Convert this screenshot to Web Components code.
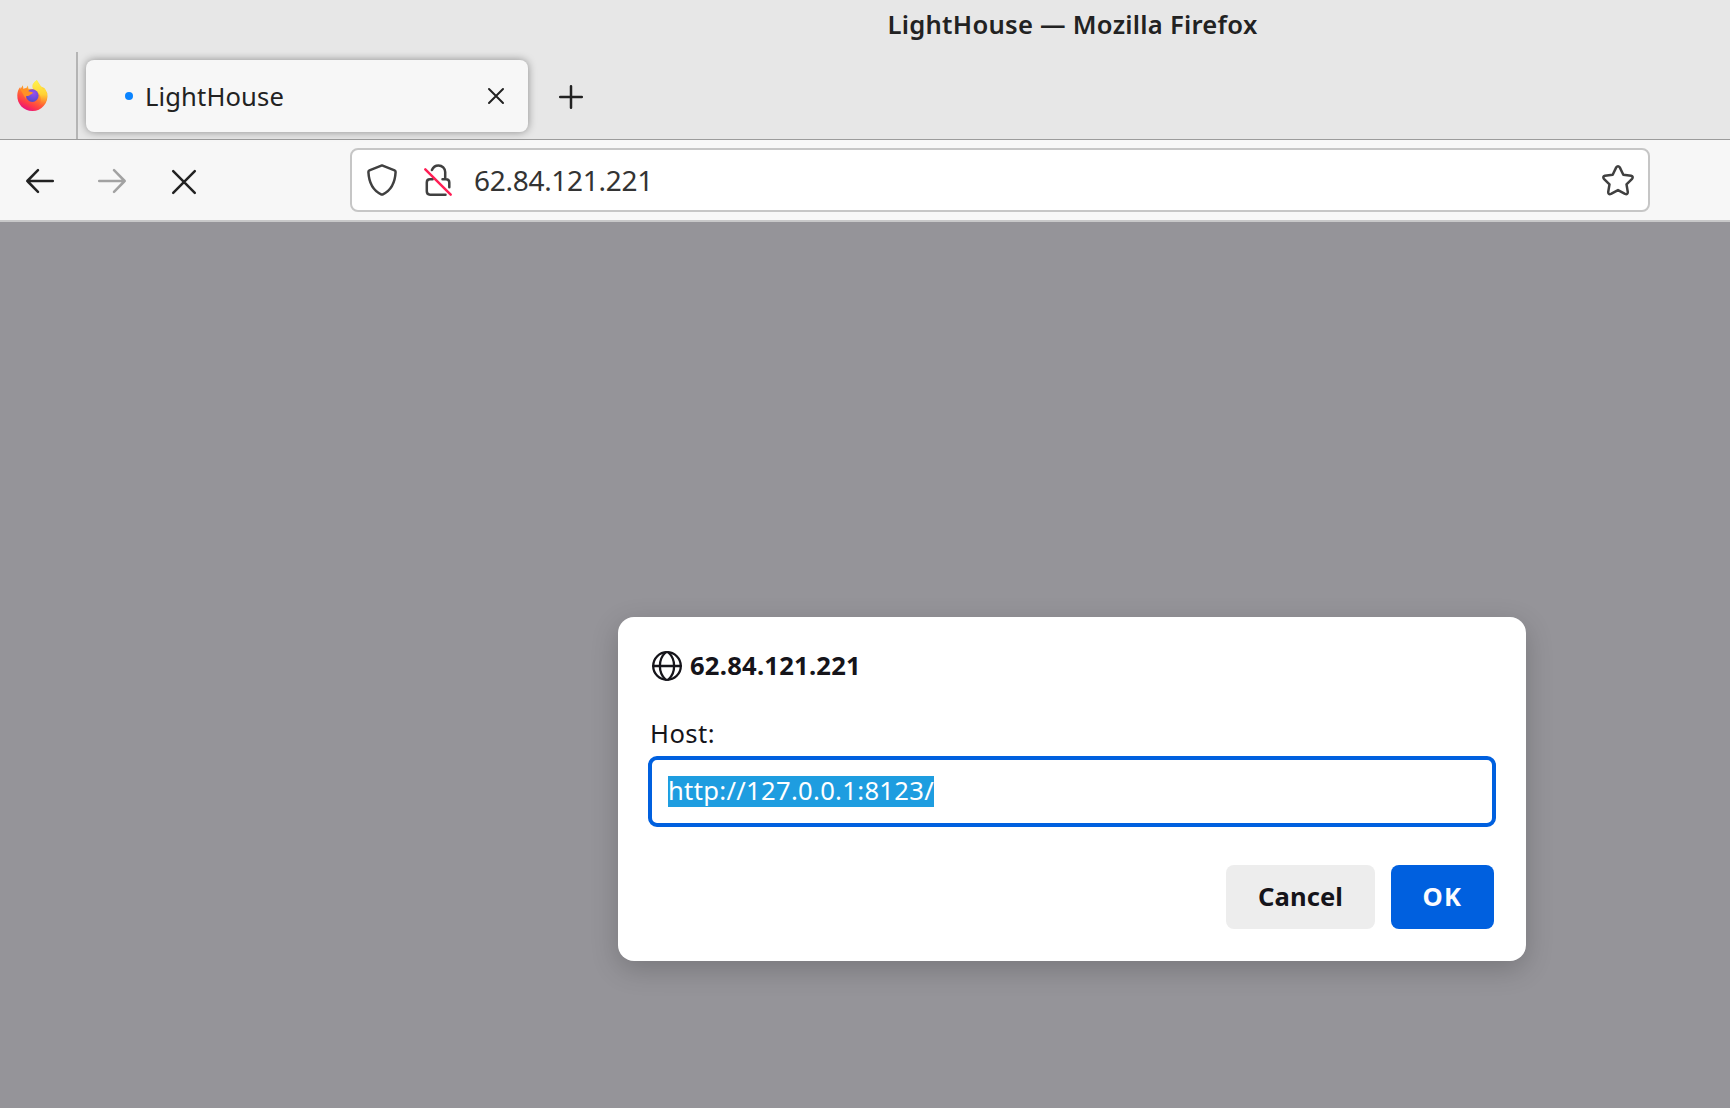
<!DOCTYPE html>
<html lang="en">
<head>
<meta charset="utf-8">
<title>LightHouse — Mozilla Firefox</title>
<style>
html, body { margin: 0; width: 1730px; height: 1108px; overflow: hidden; background: #959499; }
body { font-family: "Noto Sans", "Open Sans", sans-serif; }
</style>
</head>
<body>
<browser-window></browser-window>
<script>
const define = (name, html) => customElements.define(name, class extends HTMLElement {
  constructor() {
    super();
    this.attachShadow({ mode: 'open' }).innerHTML = html;
  }
});

/* A single line of text that adjusts its tracking to occupy a given width. */
customElements.define('ui-text', class extends HTMLElement {
  connectedCallback() {
    if (this.shadowRoot) return;
    this.attachShadow({ mode: 'open' }).innerHTML = `
      <style>:host{display:block;white-space:nowrap;flex:none;line-height:1.2}span{display:inline-block}</style><span></span>`;
    const span = this.shadowRoot.querySelector('span');
    const text = this.getAttribute('text');
    span.textContent = text;
    const target = +this.getAttribute('fit');
    const natural = span.getBoundingClientRect().width;
    if (target && natural) span.style.letterSpacing = ((target - natural) / text.length).toFixed(3) + 'px';
  }
});

/* Icons share one element; the artwork is chosen by name. */
const ICONS = {
  back: [28, 24, '<path d="M12 1.2 1.3 12 12 22.8M1.3 12h25.5"/>'],
  forward: [28, 24, '<path d="M16 1.2 26.7 12 16 22.8M26.7 12H1.2"/>'],
  stop: [24, 24, '<path d="m1.2 1.2 21.6 21.6m0-21.6L1.2 22.8"/>'],
  close: [16, 16, '<path stroke-width="2" d="m1 1 14 14m0-14L1 15"/>'],
  plus: [24, 24, '<path d="M12 1.2v21.6M1.2 12h21.6"/>'],
  shield: [30, 32, '<path d="M15 1.4 27.6 6.3Q28.7 6.8 28.6 8C28 19.5 24.3 26.3 15.9 30.3Q15 30.8 14.1 30.3C5.7 26.3 2 19.5 1.4 8Q1.3 6.8 2.4 6.3Z"/>'],
  lock: [28, 32, '<path d="M7.9 6C9.2 2.9 11.7 1.4 14.5 1.4c3.7 0 6.7 3 6.7 6.7v7M18.5 15.2H22q3.3 0 3.3 3.3v4.8M8.6 15.2H6q-3.2 0-3.2 3.2v8.9Q2.8 30.7 6 30.7h15.5"/><path d="m1.3 5.3 25.4 25.4" stroke="#ff1f55"/>'],
  star: [32, 31, '<path stroke-width="2.5" d="M14.1 2.6q1.9-2.5 3.8 0l3.4 7.1 7.8 1.1q2.6.8 1 3l-5.6 5.5 1.3 7.8q-.2 2.9-2.8 1.8L16 25.1l-7 3.8q-2.6 1.1-2.8-1.8l1.3-7.8-5.6-5.5q-1.6-2.2 1-3l7.8-1.1Z"/>'],
  globe: [30, 30, '<circle cx="15" cy="15" r="13.8" stroke-width="2.3"/><path stroke-width="2.3" d="M1.2 15h27.6M13.5 1.5C6 8.5 6 21.5 13.5 28.5M16.5 1.5C24 8.5 24 21.5 16.5 28.5"/>'],
  firefox: [31, 31, `<defs>
    <linearGradient id="b" x1=".82" y1=".08" x2=".35" y2="1"><stop offset="0" stop-color="#fff14a"/><stop offset=".3" stop-color="#ffb52b"/><stop offset=".56" stop-color="#ff7030"/><stop offset=".8" stop-color="#ff3a48"/><stop offset="1" stop-color="#e8107e"/></linearGradient>
    <linearGradient id="y" x1=".5" y1="0" x2=".5" y2="1"><stop offset="0" stop-color="#fff44f"/><stop offset=".55" stop-color="#ffd236"/><stop offset="1" stop-color="#ff8c2e" stop-opacity="0"/></linearGradient>
    <radialGradient id="p" cx=".6" cy=".3" r=".75"><stop offset="0" stop-color="#9a4fec"/><stop offset=".6" stop-color="#6c4cdb"/><stop offset="1" stop-color="#5548c0"/></radialGradient></defs>
    <g stroke="none"><path fill="url(#b)" d="M5.8 5.2 6.5 9 9.2 8.3 10.9 5.6 11.4 8.8 16 9 15.7 4.5 19.9 0 24 6.4 27.4 8 30.3 13.2C31.8 23 24.5 31 15.5 31 6.5 31 0 24 .3 15.2.4 12 1.3 9.2 3.2 7l.3 2Z"/>
    <path fill="url(#y)" d="M19.9 0c.3 3 2.2 4.6 4.1 6.4 1 1 1.8 1.8 2.1 3l1.7-.8c2 3 3 6.7 1.6 11.1-1.3 4-4.2 6-7.7 6.2 3-4 2.6-9.5-.1-12.6-2-2.4-4.6-3.4-6-5.1-.5-3.2.6-6 4.3-8.2Z"/>
    <circle cx="15.3" cy="15.6" r="6.3" fill="url(#p)"/>
    <path fill="#ff9025" d="M3 8.8c1-.2 2-.2 3.4.2 1.3-.8 2.6-.8 4-.5-.1 1.6.7 2.6 2.1 3.1l3.2.6c.3 1.2-.8 1.8-2.8 2.8-1.2.7-1.2 1.3-3.7 1-.8 1.4-.5 3 .3 4.3Z"/></g>`]
};
customElements.define('ui-icon', class extends HTMLElement {
  connectedCallback() {
    if (this.shadowRoot) return;
    const [w, h, art] = ICONS[this.getAttribute('name')];
    this.attachShadow({ mode: 'open' }).innerHTML = `
      <style>:host{display:block;flex:none;width:${w}px;height:${h}px}svg{display:block;overflow:visible}</style>
      <svg width="${w}" height="${h}" viewBox="0 0 ${w} ${h}" fill="none" stroke="currentColor" stroke-width="2.5" stroke-linecap="round" stroke-linejoin="round">${art}</svg>`;
  }
});

define('title-bar', `
  <style>
    :host{display:flex;height:52px;justify-content:center;box-sizing:border-box;padding:10px 0 0 415px;color:#222;font-size:25.6px;font-weight:600}
  </style>
  <ui-text text="LightHouse — Mozilla Firefox" fit="370"></ui-text>`);

define('tab-strip', `
  <style>
    :host{display:flex;height:88px;box-sizing:border-box;border-bottom:1px solid #9c9c9c;color:#222}
    .view{width:76px;box-sizing:border-box;padding:28px 0 0 16.5px}
    .line{width:2px;background:#b5b5b5}
    .tab{display:flex;align-items:center;width:442px;height:72px;margin:8px 0 0 8px;border-radius:8px;background:#f7f7f7;box-shadow:0 0 8px rgba(0,0,0,.4);box-sizing:border-box;padding:0 24px 0 39px}
    .dot{width:8px;height:8px;border-radius:50%;background:#0a84ff;margin-right:12px}
    ui-text{font-size:25.6px;flex:1;padding-top:3px}
    .new{margin:33px 0 0 31px}
  </style>
  <div class="view"><ui-icon name="firefox"></ui-icon></div><div class="line"></div>
  <div class="tab"><div class="dot"></div><ui-text text="LightHouse" fit="139"></ui-text><ui-icon name="close"></ui-icon></div>
  <ui-icon class="new" name="plus"></ui-icon>`);

define('url-field', `
  <style>
    :host{display:flex;align-items:center;box-sizing:border-box;width:1300px;height:64px;border:2px solid #c6c6c6;border-radius:8px;background:#fff;color:#404040;padding:0 14px 0 15px}
    ui-text{font-size:28px;color:#333;flex:1;margin-left:22px;padding-top:1px}
    .lock{margin-left:27px}
  </style>
  <ui-icon name="shield"></ui-icon><ui-icon class="lock" name="lock"></ui-icon>
  <ui-text text="62.84.121.221" fit="179"></ui-text><ui-icon name="star"></ui-icon>`);

define('nav-bar', `
  <style>
    :host{display:flex;align-items:center;height:82px;box-sizing:border-box;border-bottom:2px solid #c8c8c9;background:#f7f7f7;color:#222;padding:0 0 0 26px}
    .buttons{display:flex;align-items:center;width:324px;padding-top:2px}
    .fwd{margin-left:44px;color:#a2a2a2}.stop{margin-left:46px;margin-top:1px}
  </style>
  <div class="buttons"><ui-icon name="back"></ui-icon><ui-icon class="fwd" name="forward"></ui-icon><ui-icon class="stop" name="stop"></ui-icon></div>
  <url-field></url-field>`);

define('dialog-button', `
  <style>
    :host{display:flex;align-items:center;justify-content:center;height:64px;width:149px;border-radius:8px;background:#ededed;color:#15141a;font-weight:700;font-size:25.6px}
    :host([primary]){width:103px;background:#0060df;color:#fbfbfe}
  </style><slot></slot>`);

define('prompt-dialog', `
  <style>
    :host{display:block;box-sizing:border-box;width:908px;height:344px;border-radius:16px;background:#fff;color:#15141a;box-shadow:0 8px 28px rgba(0,0,0,.2);padding:34px 30px 32px;font-size:25.6px}
    header{display:flex;align-items:center;height:30px;padding-left:4px;gap:8px;font-weight:700}
    .label{margin:38px 0 0 2px;height:37px}
    .input{display:flex;align-items:center;box-sizing:border-box;height:71px;border:4px solid #0060df;border-radius:9px;padding-left:16px}
    .selection{display:flex;align-items:center;width:266px;height:31px;background:#1e9de0;color:#fff}
    footer{display:flex;justify-content:flex-end;gap:16px;margin:38px 2px 0 0}
  </style>
  <header><ui-icon name="globe"></ui-icon><ui-text text="62.84.121.221" fit="171"></ui-text></header>
  <div class="label"><ui-text text="Host:" fit="65"></ui-text></div>
  <div class="input"><div class="selection"><ui-text text="http://127.0.0.1:8123/" fit="266"></ui-text></div></div>
  <footer><dialog-button><ui-text text="Cancel" fit="85"></ui-text></dialog-button><dialog-button primary><ui-text text="OK" fit="40"></ui-text></dialog-button></footer>`);

define('page-view', `
  <style>:host{display:flex;justify-content:center;align-items:flex-start;height:886px;box-sizing:border-box;padding:395px 0 0 414px;background:#959499}</style>
  <slot></slot>`);

define('browser-window', `
  <style>:host{display:block;width:1730px;height:1108px;background:#e7e7e7}</style>
  <title-bar></title-bar><tab-strip></tab-strip><nav-bar></nav-bar>
  <page-view><prompt-dialog></prompt-dialog></page-view>`);
</script>
</body>
</html>
